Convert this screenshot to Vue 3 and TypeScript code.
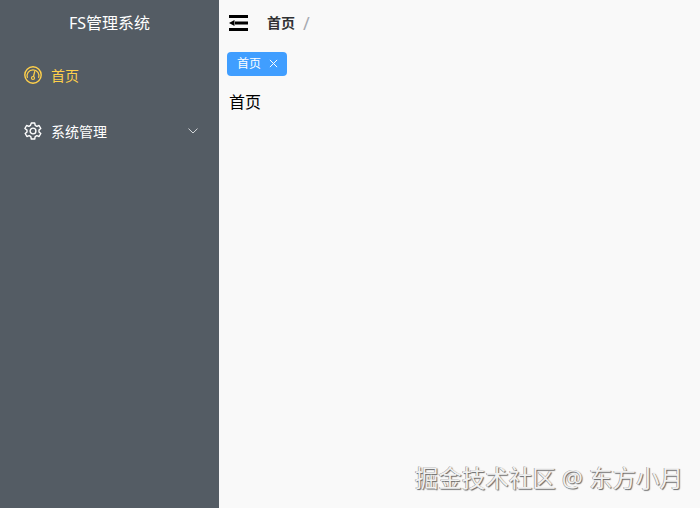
<script setup lang="ts">
const title: string = 'FS管理系统'
</script>

<template>
  <div class="layout">
    <aside class="aside">
      <div class="logo">{{ title }}</div>
      <nav class="menu">
        <div class="item active">
          <svg class="icon" viewBox="0 0 18 18" fill="none" stroke="currentColor">
            <circle cx="9" cy="9" r="8.200" stroke-width="1.400" />
            <path d="M3.400 12A6 6 0 1 1 14.600 12" stroke-width="1.200" />
            <path d="M10.800 5.200 9.500 10.600" stroke-width="1.300" />
            <circle cx="9" cy="12" r="1.500" stroke-width="1.200" />
          </svg>
          <span>首页</span>
        </div>
        <div class="item">
          <svg class="icon" viewBox="0 0 18 18" fill="none" stroke="currentColor" stroke-width="1.400" stroke-linejoin="round">
            <path d="M7.300 1h3.400l.5 2.400 1.600.9 2.300-.8 1.700 3-1.800 1.600v1.800l1.800 1.600-1.700 3-2.300-.8-1.600.9-.5 2.400H7.300l-.5-2.400-1.600-.9-2.300.8-1.700-3 1.800-1.600V8.100L.9 6.500l1.700-3 2.300.8 1.600-.9z" />
            <circle cx="9" cy="9" r="2.900" />
          </svg>
          <span>系统管理</span>
          <svg class="chevron" viewBox="0 0 10 6" fill="none" stroke="currentColor" stroke-width="1">
            <path d="M.5.600 5 5 9.500.6" />
          </svg>
        </div>
      </nav>
    </aside>
    <main class="main">
      <header class="header">
        <svg class="fold" viewBox="0 0 20 16" fill="#000">
          <rect x="0" y="0" width="19" height="3" />
          <rect x="6" y="6.500" width="13" height="3" />
          <rect x="0" y="13" width="19" height="3" />
          <path d="M0 8 5.500 5v6z" />
        </svg>
        <span class="crumb">首页</span>
        <span class="sep">/</span>
      </header>
      <div class="tabs">
        <div class="tag">
          <span class="tag-text">首页</span>
          <svg class="close" viewBox="0 0 10 10" fill="none" stroke="currentColor" stroke-width="1.100">
            <path d="M1 1l8 8M9 1l-8 8" />
          </svg>
        </div>
      </div>
      <div class="content">首页</div>
      <div class="watermark">掘金技术社区 @ 东方小月</div>
    </main>
  </div>
</template>

<style>
body {
  margin: 0;
}
</style>

<style scoped>
.layout {
  display: flex;
  width: 700px;
  height: 508px;
  overflow: hidden;
  font-family: "Noto Sans", "Noto Sans CJK SC", sans-serif;
}
.aside {
  width: 219px;
  flex: none;
  background: #545c64;
  color: #fff;
}
.logo {
  height: 47px;
  line-height: 46px;
  text-align: center;
  font-size: 16px;
}
.menu {
  display: flex;
  flex-direction: column;
}
.item {
  display: flex;
  align-items: center;
  height: 56px;
  padding: 0 21px 0 24px;
  font-size: 14px;
}
.item.active {
  color: #ffd04b;
}
.icon {
  width: 18px;
  height: 18px;
  margin-right: 9px;
  flex: none;
}
.chevron {
  width: 10px;
  height: 6px;
  margin-left: auto;
  color: #d5d8da;
}
.main {
  position: relative;
  flex: 1;
  background: #f9f9f9;
}
.header {
  display: flex;
  align-items: center;
  height: 46px;
  padding-left: 10px;
  font-size: 14px;
  line-height: 20px;
}
.fold {
  width: 20px;
  height: 16px;
  margin-right: 18px;
}
.crumb {
  margin-bottom: 1px;
  font-weight: 700;
  color: #303133;
}
.sep {
  margin-bottom: 1px;
  margin-left: 8px;
  color: #a8abb2;
  font-size: 18px;
}
.tabs {
  display: flex;
  padding: 6px 8px 0;
}
.tag {
  display: flex;
  align-items: center;
  height: 24px;
  padding: 0 9px 0 10px;
  border-radius: 4px;
  background: #409eff;
  color: #fff;
  font-size: 12px;
}
.tag-text {
  line-height: 23px;
  height: 24px;
}
.close {
  width: 9px;
  height: 9px;
  margin-left: 8px;
  margin-bottom: 1px;
}
.content {
  padding: 15px 10px 0;
  font-size: 16px;
  line-height: 22px;
  color: #000;
}
.watermark {
  position: absolute;
  right: 17px;
  bottom: 16px;
  font-size: 23.500px;
  line-height: 28px;
  color: #f1f1f1;
  text-shadow: 1px 1px 1px #666, -0.5px -0.5px 0 #888;
  white-space: nowrap;
}
</style>
